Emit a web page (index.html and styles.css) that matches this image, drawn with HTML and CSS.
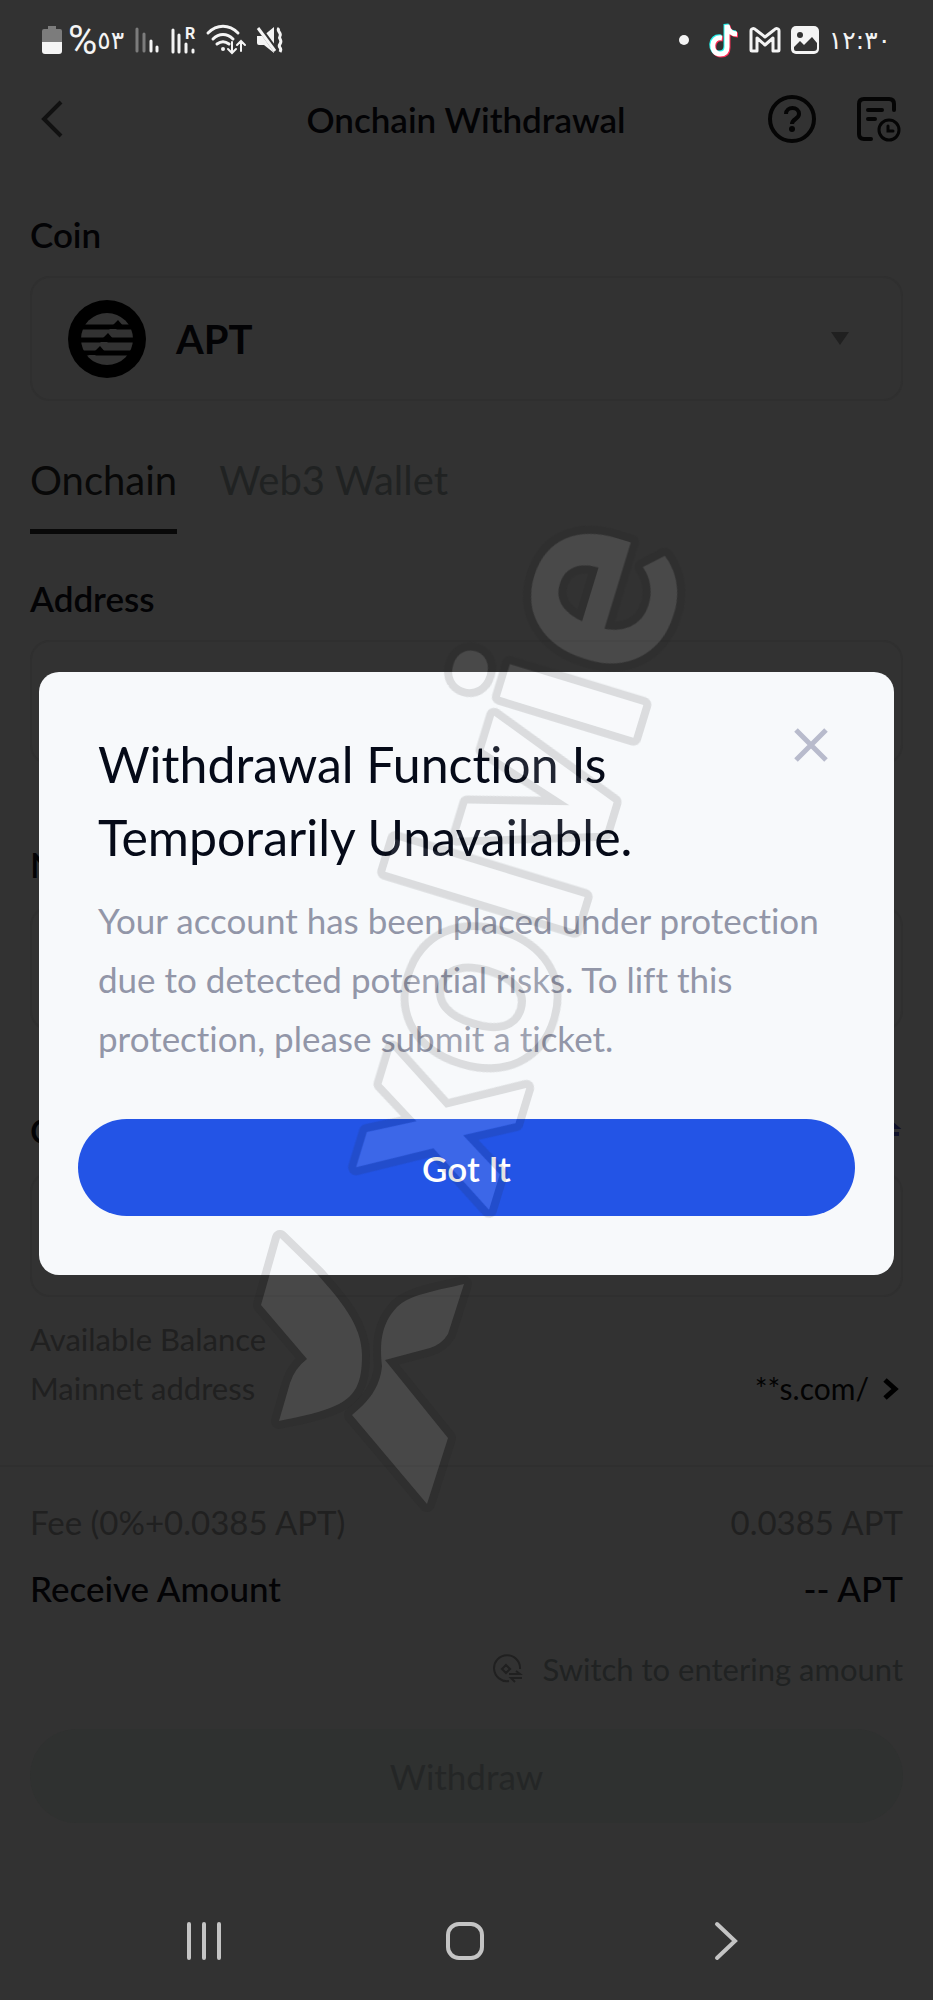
FILE: index.html
```html
<!DOCTYPE html>
<html lang="en">
<head>
    <meta charset="utf-8" />
    <meta name="viewport" content="width=device-width, initial-scale=1">
    <title>Onchain Withdrawal</title>
    <link rel="stylesheet" href="styles.css">
</head>
<body>
    <div class="statusBar">
        <div class="statusGroup">
            <svg width="20" height="28" viewBox="0 0 20 28">
                <path d="M6 0h8v3h4a2 2 0 0 1 2 2v11H0V5a2 2 0 0 1 2-2h4z" fill="#7c7c7c"/>
                <path d="M0 16h20v9a3 3 0 0 1-3 3H3a3 3 0 0 1-3-3z" fill="#f4f4f4"/>
            </svg>
            <span class="battery"><span class="percent">%</span>٥٣</span>
            <svg class="signal" width="26" height="26" viewBox="0 0 26 26" stroke-width="3" stroke-linecap="round">
                <path d="M3 2v22M10 7v17" stroke="#7c7c7c"/>
                <path d="M17 14v10M23 20v4" stroke="#f4f4f4"/>
            </svg>
            <svg width="26" height="28" viewBox="0 0 26 28">
                <path d="M3 4v22M9 9v17M16 18v8M23 24v2" stroke="#f4f4f4" stroke-width="3" stroke-linecap="round"/>
                <text x="15" y="13" class="roaming">R</text>
            </svg>
            <svg width="40" height="30" viewBox="0 0 40 30" fill="none" stroke="#f4f4f4" stroke-width="3" stroke-linecap="round">
                <path d="M2 8C11-1 23-1 32 8M7 14c6-6 14-6 20 0M11 19c4-3 8-3 12 0"/>
                <circle cx="17" cy="24" r="2" fill="#f4f4f4" stroke="none"/>
                <path d="M26 17v10M22 24l4 4 4-4M35 26V16M31 20l4-4 4 4" stroke-width="2"/>
            </svg>
            <svg width="28" height="28" viewBox="0 0 28 28">
                <path d="M1 10h6l11-9v26L8 19H3a2 2 0 0 1-2-2z" fill="#f4f4f4"/>
                <path d="M2 0l19 26" stroke="#323232" stroke-width="5"/>
                <path d="M2 2l17 23" stroke="#f4f4f4" stroke-width="3"/>
                <path d="M23 2c-3 3 3 5 1 8s3 4 0 8 3 3 0 8" fill="none" stroke="#f4f4f4" stroke-width="3"/>
            </svg>
        </div>
        <div class="statusGroup">
            <svg class="dot" width="10" height="10" viewBox="0 0 10 10"><circle cx="5" cy="5" r="5" fill="#f4f4f4"/></svg>
            <svg width="30" height="34" viewBox="0 0 30 34" fill="none" stroke-width="5">
                <path d="M12 14c-12-2-12 16-2 16 5 0 7-3 7-7V1c1 6 5 9 10 9" stroke="#25f4ee"/>
                <path d="M14 16c-12-2-12 16-2 16 5 0 7-3 7-7V3c1 6 5 9 10 9" stroke="#fe2c55"/>
                <path d="M13 15c-12-2-12 16-2 16 5 0 7-3 7-7V2c1 6 5 9 10 9" stroke="#fff"/>
            </svg>
            <svg width="32" height="26" viewBox="0 0 32 26" fill="none" stroke="#f4f4f4" stroke-width="3" stroke-linejoin="round">
                <path d="M2 4c0-3 3-3 5-1l9 7 9-7c2-2 5-2 5 1v19q0 1-1 1h-5V11l-8 7-8-7v13H3q-1 0-1-1z"/>
            </svg>
            <svg width="28" height="28" viewBox="0 0 28 28">
                <rect width="28" height="28" rx="5" fill="#f4f4f4"/>
                <circle cx="9" cy="9" r="3" fill="#323232"/>
                <path d="M3 21l6-6 4 4 8-8 5 6v5q0 3-3 3H5q-2 0-2-2z" fill="#323232"/>
            </svg>
            <span class="clock">١٢:٣٠</span>
        </div>
    </div>

    <header>
        <button class="iconBtn" aria-label="Back">
            <svg width="24" height="40" viewBox="0 0 24 40" fill="none" stroke="#111" stroke-width="4"><path d="M21 3L4 20l17 17"/></svg>
        </button>
        <h1>Onchain Withdrawal</h1>
        <div class="headerIcons">
            <button class="iconBtn" aria-label="Help">
                <svg width="48" height="48" viewBox="0 0 48 48" fill="none" stroke="#050505" stroke-width="4">
                    <circle cx="24" cy="24" r="22"/>
                    <path d="M18 19c0-8 13-8 13 0 0 5-7 5-7 10" stroke-width="4"/>
                    <circle cx="24" cy="34" r="3" fill="#050505" stroke="none"/>
                </svg>
            </button>
            <button class="iconBtn" aria-label="History">
                <svg width="46" height="46" viewBox="0 0 46 46" fill="none" stroke="#050505" stroke-width="4" stroke-linecap="round">
                    <path d="M15 43H8q-5 0-5-5V8q0-5 5-5h25q5 0 5 5v6"/>
                    <path d="M12 14h14M12 23h7"/>
                    <circle cx="33" cy="34" r="10" stroke-width="3"/>
                    <path d="M32 30v5h5" stroke-width="3"/>
                </svg>
            </button>
        </div>
    </header>

    <main>
        <section class="field">
            <h2>Coin</h2>
            <button class="box coin">
                <svg width="78" height="78" viewBox="0 0 78 78">
                    <circle cx="39" cy="39" r="39"/>
                    <circle cx="39" cy="39" r="26" fill="#323232"/>
                    <path d="M12 27h54M12 40h54M12 53h54" stroke="#000" stroke-width="5"/>
                    <path d="M43 27l7-7 6 7zM33 40l7-7 6 7zM25 53l7-7 6 7z"/>
                    <path d="M41 29l4 4 4-4zM32 42l4 4 4-4zM20 55l4 4 4-4z" fill="#323232"/>
                </svg>
                <span>APT</span>
                <svg class="caret" width="18" height="13" viewBox="0 0 18 13"><path d="M0 0h18L9 13z" fill="#202020"/></svg>
            </button>
        </section>

        <nav class="tabs">
            <button class="tab active">Onchain</button>
            <button class="tab">Web3 Wallet</button>
        </nav>

        <section class="field">
            <h2><label for="address">Address</label></h2>
            <input class="box" type="text" id="address">
        </section>
        <section class="field">
            <h2><label for="network">Network</label></h2>
            <input class="box" type="text" id="network">
        </section>
        <section class="field quantity">
            <div class="fieldHead">
                <h2><label for="quantity">Quantity</label></h2>
                <button class="iconBtn" aria-label="Swap unit">
                    <svg width="28" height="20" viewBox="0 0 28 20" fill="none" stroke="#10122a" stroke-width="4"><path d="M0 7h25l-7-6M28 14H3l7 6"/></svg>
                </button>
            </div>
            <input class="box" type="text" id="quantity">
        </section>

        <div class="row small">
            <span>Available Balance</span>
        </div>
        <div class="row small">
            <span>Mainnet address</span>
            <a href="#" class="link">**s.com/
                <svg width="16" height="22" viewBox="0 0 16 22" fill="none" stroke="#000" stroke-width="5"><path d="M2 2l10 9-10 9"/></svg>
            </a>
        </div>
    </main>

    <footer>
        <div class="row fee"><span>Fee (0%+0.0385 APT)</span><span>0.0385 APT</span></div>
        <div class="row receive"><span>Receive Amount</span><span>-- APT</span></div>
        <button class="switch">
            <svg width="30" height="30" viewBox="0 0 30 30" fill="none" stroke="#202020" stroke-width="2">
                <path d="M17 27A13 13 0 1 1 28 15M14 11l4 4-4 4-4-4zM17 20h11l-4-3M30 24H19l4 4"/>
            </svg>
            Switch to entering amount
        </button>
        <button class="withdraw" disabled>Withdraw</button>
    </footer>

    <div class="navBar">
        <button class="iconBtn" aria-label="Recent apps">
            <svg width="38" height="38" viewBox="0 0 38 38" stroke="#c4c4c4" stroke-width="4" stroke-linecap="round"><path d="M4 2v34M19 2v34M34 2v34"/></svg>
        </button>
        <button class="iconBtn" aria-label="Home">
            <svg width="38" height="38" viewBox="0 0 38 38" fill="none" stroke="#c4c4c4" stroke-width="4"><rect x="2" y="2" width="34" height="34" rx="11"/></svg>
        </button>
        <button class="iconBtn" aria-label="Back">
            <svg width="38" height="38" viewBox="0 0 38 38" fill="none" stroke="#c4c4c4" stroke-width="4" stroke-linecap="round"><path d="M10 2l18 17-18 17"/></svg>
        </button>
    </div>

    <div class="overlay">
        <div class="modal" role="dialog" aria-labelledby="modalTitle">
            <div class="modalHead">
                <h2 id="modalTitle">Withdrawal Function Is<br>Temporarily Unavailable.</h2>
                <button class="iconBtn" aria-label="Close">
                    <svg width="34" height="34" viewBox="0 0 34 34" stroke="#b8bbcc" stroke-width="5"><path d="M2 2l30 30M32 2L2 32"/></svg>
                </button>
            </div>
            <p>Your account has been placed under protection due to detected potential risks. To lift this protection, please submit a ticket.</p>
            <button class="gotIt">Got It</button>
        </div>
    </div>

    <svg class="watermark" viewBox="0 0 933 2000">
        <defs>
            <g id="mark">
                <path d="M280 1238L318 1275C340 1300 362 1325 362 1355C362 1382 357 1398 330 1408C315 1414 297 1417 279 1421L290 1383Q295 1368 307 1359L261 1305z"/>
                <path d="M464 1284L448 1334Q442 1344 430 1348L385 1360L448 1438L427 1504L352 1415C368 1402 380 1388 382 1366C380 1345 380 1325 397 1307C410 1294 440 1290 464 1284z"/>
                <text class="brand" transform="translate(488 1213) rotate(-73)">xolvie</text>
            </g>
            <mask id="outside" maskUnits="userSpaceOnUse" x="0" y="0" width="933" height="2000">
                <rect width="933" height="2000" fill="#fff"/>
                <use href="#mark" fill="#000"/>
            </mask>
        </defs>
        <use href="#mark" class="halo" mask="url(#outside)"/>
        <use href="#mark" class="shape"/>
    </svg>
</body>
</html>
```
FILE: styles.css
```css
* {
    box-sizing: border-box;
}
body {
    font-family: Lato, "Noto Sans", sans-serif;
    font-size: 35px;
    font-variant-ligatures: none;
    margin: 0;
    min-height: 100vh;
    display: flex;
    flex-direction: column;
    position: relative;
    background-color: #323232;
    color: #030305;
}
h1, h2, p {
    margin: 0;
}
button, input {
    font: inherit;
    font-variant-ligatures: none;
    color: inherit;
    background: none;
    border: none;
    padding: 0;
}
a {
    color: inherit;
    text-decoration: none;
}
svg {
    display: block;
    flex-shrink: 0;
    overflow: visible;
}
.statusBar {
    display: flex;
    justify-content: space-between;
    align-items: center;
    height: 80px;
    padding: 0 42px;
    color: #f4f4f4;
    font-family: "DejaVu Sans", sans-serif;
    font-size: 25px;
}
.statusGroup {
    display: flex;
    align-items: center;
    gap: 10px;
}
.battery {
    display: flex;
    align-items: center;
    margin-left: -4px;
}
.percent {
    font-family: Roboto, sans-serif;
    font-size: 40px;
}
.roaming {
    font-family: Roboto, sans-serif;
    font-size: 16px;
    font-weight: bold;
    fill: #f4f4f4;
}
.dot {
    margin-right: 10px;
}
header {
    display: flex;
    justify-content: space-between;
    align-items: center;
    height: 78px;
    padding: 0 31px 0 40px;
}
h1 {
    flex: 1;
    font-size: 35px;
    font-weight: 600;
    text-align: center;
    margin-left: 100px;
}
.headerIcons {
    display: flex;
    gap: 40px;
}
main {
    display: flex;
    flex-direction: column;
    padding: 52px 30px 0;
}
.field {
    margin-bottom: 75px;
}
.quantity {
    margin-bottom: 18px;
}
h2 {
    font-size: 35px;
    line-height: 48px;
    font-weight: 600;
}
.fieldHead {
    display: flex;
    justify-content: space-between;
    padding-right: 4px;
}
.box {
    display: flex;
    align-items: center;
    width: 100%;
    height: 125px;
    margin-top: 18px;
    padding: 0 36px;
    border: 2px solid #2f2f2f;
    border-radius: 20px;
}
.coin {
    gap: 30px;
    font-size: 40px;
    font-weight: bold;
}
.caret {
    margin-left: auto;
    margin-right: 16px;
}
.tabs {
    display: flex;
    gap: 42px;
    margin-top: -29px;
    margin-bottom: 40px;
}
.tab {
    font-size: 40px;
    line-height: 66px;
    padding-bottom: 16px;
    color: #202222;
    border-bottom: 5px solid transparent;
}
.active {
    color: #080808;
    border-color: #080808;
}
.row {
    display: flex;
    justify-content: space-between;
}
.small {
    font-size: 31px;
    line-height: 49px;
    color: #202020;
}
.link {
    display: flex;
    align-items: center;
    gap: 14px;
    padding-right: 4px;
    font-size: 30px;
    color: #030303;
}
footer {
    display: flex;
    flex-direction: column;
    margin-top: 52px;
    padding: 22px 30px 0;
    border-top: 2px solid #2f2f2f;
}
.fee, .receive {
    line-height: 66px;
}
.fee {
    font-size: 33px;
    color: #202020;
}
.receive {
    font-weight: 500;
}
.switch {
    display: flex;
    align-items: center;
    align-self: flex-end;
    gap: 20px;
    margin-top: 22px;
    font-size: 31px;
    line-height: 52px;
    color: #202222;
}
.withdraw {
    height: 94px;
    margin-top: 34px;
    border-radius: 47px;
    background-color: #2f3130;
    color: #242626;
}
.navBar {
    display: flex;
    justify-content: space-between;
    align-items: center;
    margin-top: auto;
    height: 118px;
    padding: 0 188px 0 185px;
}
.overlay {
    position: absolute;
    top: 0;
    left: 0;
    width: 100%;
    height: 100%;
    padding: 672px 39px 0;
}
.modal {
    display: flex;
    flex-direction: column;
    padding: 56px 39px 59px;
    border-radius: 20px;
    background-color: #f7f9fb;
}
.modalHead {
    display: flex;
    justify-content: space-between;
    align-items: flex-start;
    padding: 0 27px 0 20px;
}
.modalHead h2 {
    font-size: 50px;
    line-height: 73px;
    font-weight: normal;
    color: #050a18;
}
.modal p {
    margin: 17px 0 51px;
    padding: 0 20px;
    line-height: 59px;
    color: #9296a8;
}
.gotIt {
    height: 97px;
    border-radius: 49px;
    background-color: #2354e6;
    color: #fff;
    font-weight: 600;
}
.watermark {
    position: absolute;
    top: 0;
    left: 0;
    width: 100%;
    pointer-events: none;
}
.brand {
    font-family: Roboto, sans-serif;
    font-size: 264px;
    font-weight: 600;
}
.shape {
    fill: rgba(255, 255, 255, 0.11);
}
.halo {
    fill: none;
    stroke: rgba(30, 30, 30, 0.13);
    stroke-width: 16px;
    stroke-linejoin: round;
}
```
